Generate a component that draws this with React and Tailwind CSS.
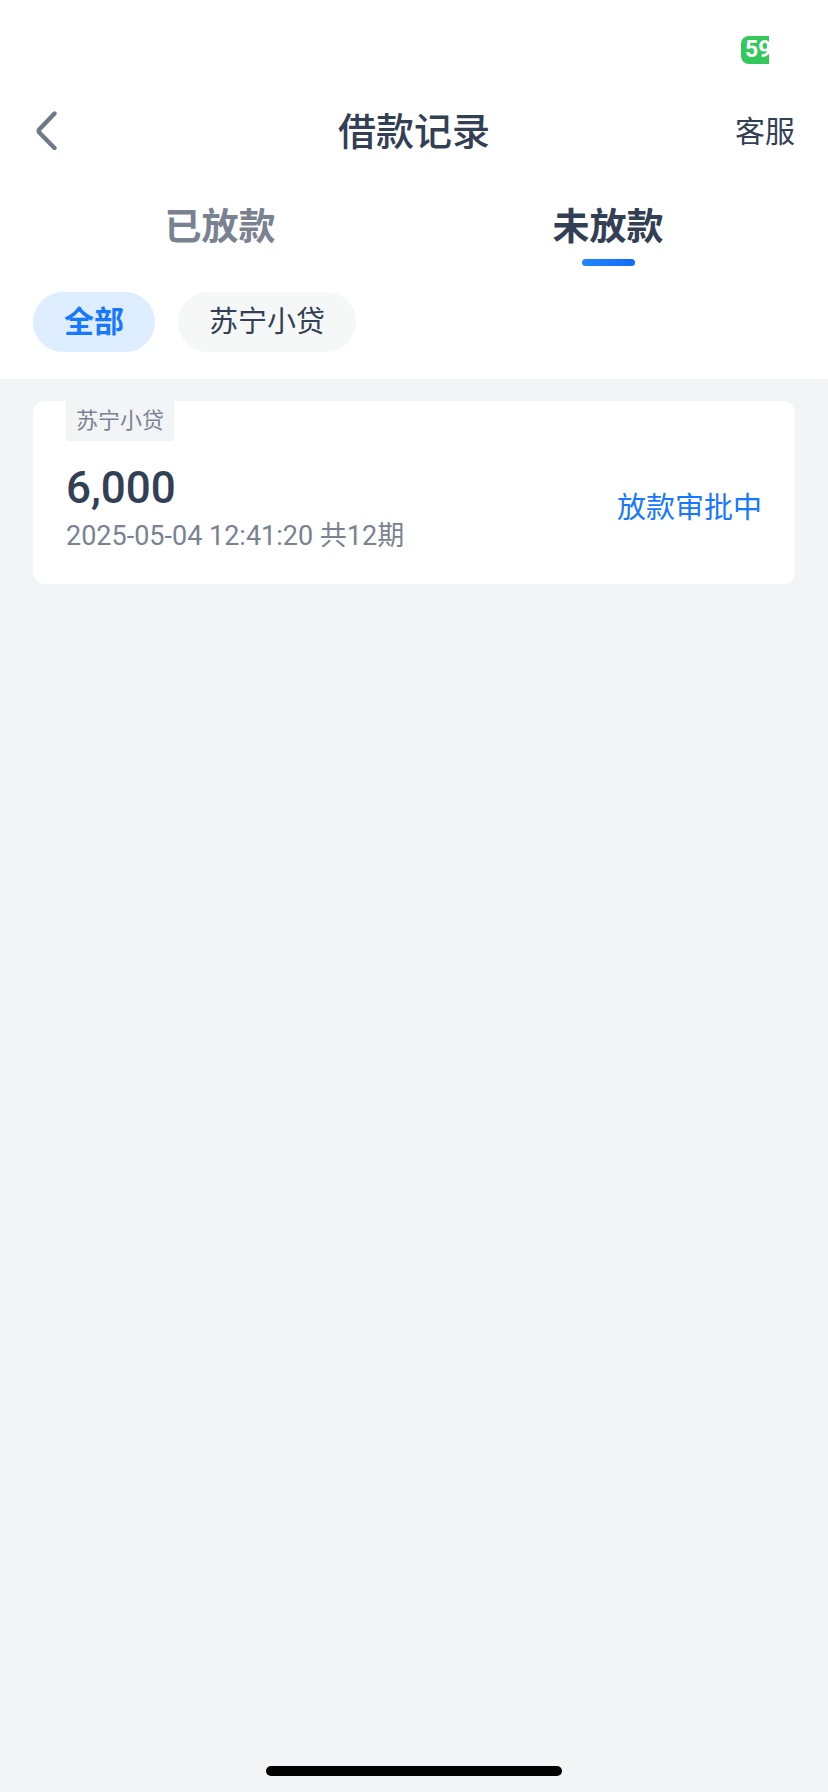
import { useState } from 'react';

const tabs = [
  { id: 'paid', label: '已放款' },
  { id: 'unpaid', label: '未放款' }
];

const lenders = ['全部', '苏宁小贷'];

const records = [
  {
    id: 1,
    lender: '苏宁小贷',
    amount: '6,000',
    time: '2025-05-04 12:41:20',
    periods: 12,
    status: '放款审批中',
    tab: 'unpaid'
  }
];

function StatusBar() {
  return (
    <div className="flex h-24 items-start justify-end pt-9 pr-[59px]">
      <div className="h-7 w-7 overflow-hidden rounded-l-lg bg-[#34c759] pl-1 text-[23px] leading-7 font-bold whitespace-nowrap text-white">
        59
      </div>
    </div>
  );
}

function RecordCard({ record }) {
  return (
    <li className="flex items-end justify-between rounded-xl bg-white px-[33px] pb-[26px]">
      <div>
        <span className="inline-block h-10 rounded-b bg-[#f3f4f6] px-[10px] align-top text-[22px] leading-10 text-[#7a8292]">
          {record.lender}
        </span>
        <p className="mt-5 text-[44px] leading-[54px] font-medium text-[#333f54]">{record.amount}</p>
        <p className="text-[27px] leading-[43px] text-[#7a8292]">
          {record.time} 共{record.periods}期
        </p>
      </div>
      <p className="pb-[30px] text-[29px] leading-10 text-[#1677ff]">{record.status}</p>
    </li>
  );
}

export default function App() {
  const [activeTab, setActiveTab] = useState('unpaid');
  const [lender, setLender] = useState('全部');

  const visible = records.filter(
    (record) => record.tab === activeTab && (lender === '全部' || record.lender === lender)
  );

  return (
    <div className="flex min-h-screen flex-col bg-[#f3f4f6] font-[Roboto,'Noto_Sans_CJK_SC',sans-serif] text-[#333f54]">
      <header className="bg-white pb-[27px]">
        <StatusBar />

        <div className="grid h-[72px] grid-cols-[1fr_auto_1fr] items-center px-[33px]">
          <button type="button" aria-label="返回" className="justify-self-start">
            <svg width="26" height="42" viewBox="0 0 26 42" fill="none">
              <path
                d="M21.5 2.5 6.5 18.2Q5 20 6.5 21.8L21.5 37"
                stroke="#6f7989"
                strokeWidth="4.4"
                strokeLinecap="round"
                strokeLinejoin="round"
              />
            </svg>
          </button>
          <h1 className="text-[38px] leading-[56px] font-medium">借款记录</h1>
          <button type="button" className="justify-self-end text-[30px] leading-[42px]">
            客服
          </button>
        </div>

        <div role="tablist" className="flex px-[26px] pt-8">
          {tabs.map((tab) => (
            <button
              key={tab.id}
              type="button"
              role="tab"
              aria-selected={activeTab === tab.id}
              onClick={() => setActiveTab(tab.id)}
              className={`flex flex-1 flex-col items-center text-[37px] leading-[56px] font-bold ${
                activeTab === tab.id ? 'text-[#333f54]' : 'text-[#7a8292]'
              }`}
            >
              {tab.label}
              <span
                className={`mt-[3px] h-[7px] w-[53px] rounded-full ${
                  activeTab === tab.id ? 'bg-linear-to-r from-[#2287ff] to-[#1269f8]' : ''
                }`}
              />
            </button>
          ))}
        </div>

        <div className="flex gap-[23px] px-[33px] pt-[26px]">
          {lenders.map((name) => (
            <button
              key={name}
              type="button"
              aria-pressed={lender === name}
              onClick={() => setLender(name)}
              className={`h-[60px] rounded-full px-[31px] leading-[60px] ${
                lender === name
                  ? 'bg-[#deedff] text-[30px] font-bold text-[#1677ff]'
                  : 'bg-[#f6f8f8] text-[29px]'
              }`}
            >
              {name}
            </button>
          ))}
        </div>
      </header>

      <main className="flex-1 px-[33px] pt-[22px]">
        <ul className="grid gap-5">
          {visible.map((record) => (
            <RecordCard key={record.id} record={record} />
          ))}
        </ul>
      </main>

      <div className="mx-auto mb-4 h-[10px] w-[296px] rounded-full bg-black" />
    </div>
  );
}
